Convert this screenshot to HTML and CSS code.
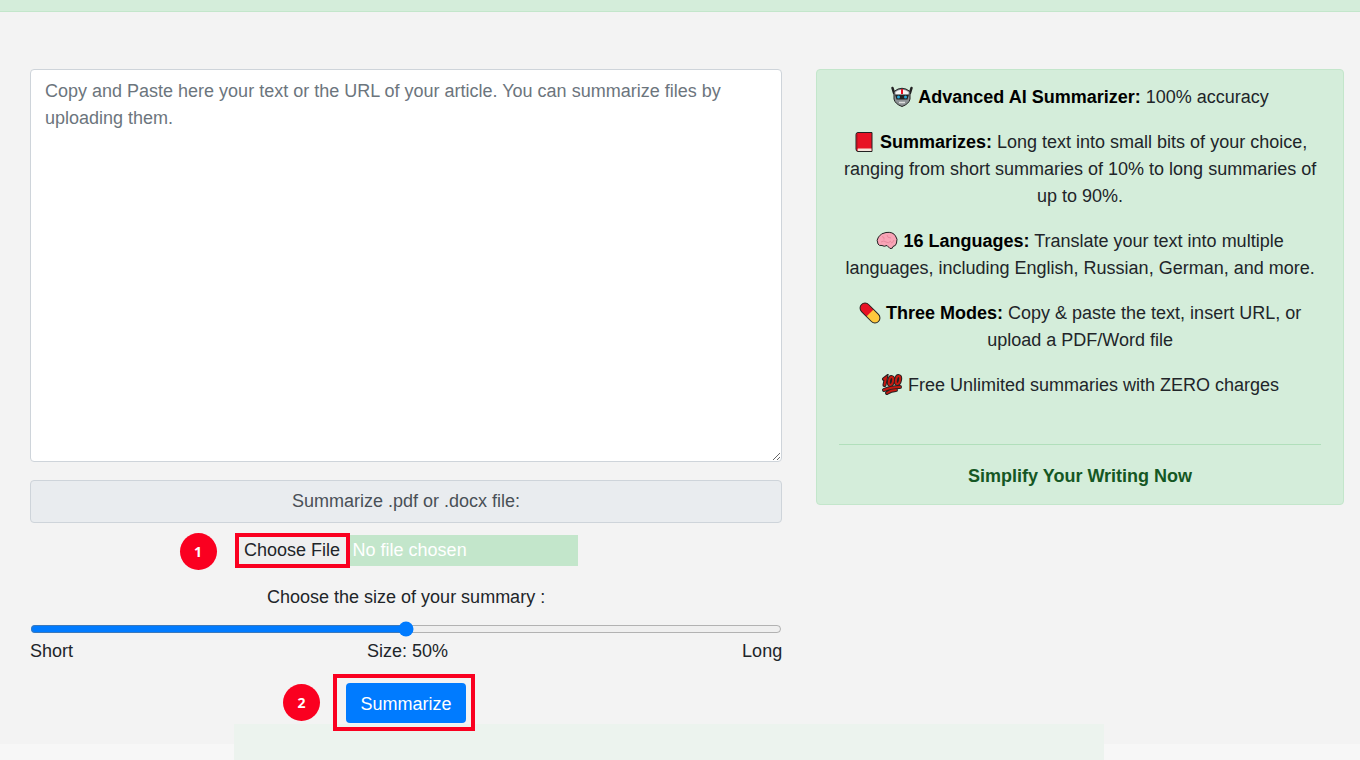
FILE: index.html
```
<!DOCTYPE html>
<html lang="en">

<head>
    <meta charset="UTF-8">
    <meta name="viewport" content="width=device-width, initial-scale=1.0">
    <title>Text Summarizer</title>
    <link rel="stylesheet" href="styles.css">
</head>

<body>
    <div class="top_alert"></div>
    <main class="main">
        <form class="tool" onsubmit="return false">
            <textarea class="text_input" aria-label="Text to summarize" placeholder="Copy and Paste here your text or the URL of your article. You can summarize files by uploading them."></textarea>
            <label class="file_label" for="file">Summarize .pdf or .docx file:</label>
            <div class="file_row">
                <input type="file" class="file_input" id="file">
                <span class="mark mark_file"></span>
                <span class="step step_file">1</span>
            </div>
            <label class="size_label" for="size">Choose the size of your summary :</label>
            <input type="range" class="size_range" id="size" min="0" max="100" value="50">
            <div class="size_text">
                <span>Short</span>
                <span>Size: <span id="percent">50</span>%</span>
                <span>Long</span>
            </div>
            <div class="submit_row">
                <button type="submit" class="btn">Summarize</button>
                <span class="mark mark_submit"></span>
                <span class="step step_submit">2</span>
            </div>
        </form>

        <aside class="features">
            <p>
                <svg class="icon" viewBox="0 0 22 22">
                    <path d="M3 7 1.500 2M19 7l1.500-5" stroke="#222" stroke-width="2.500" stroke-linecap="round" />
                    <path d="M3 5.500Q11-1 19 5.500V13Q18 18 11 20.500 4 18 3 13z" fill="#8d9295" stroke="#222" stroke-width="1" />
                    <path d="M4.500 6Q11 1.500 17.500 6V9h-13z" fill="#f4f4f4" />
                    <path d="M10 3h2v5h-2z" fill="#e81224" />
                    <path d="M4 8.500h14l-1.500 5h-11z" fill="#222" />
                    <circle cx="7.500" cy="11" r="1.500" fill="#27a9dc" />
                    <circle cx="14.500" cy="11" r="1.500" fill="#27a9dc" />
                    <path d="M8 16.500h6" stroke="#ddd" stroke-width="1.500" />
                </svg>
                <b>Advanced AI Summarizer:</b> 100% accuracy
            </p>
            <p>
                <svg class="icon" viewBox="0 0 22 22">
                    <path d="M5 1.500H19V20.500H5Q3 20.500 3 18V3.500Q3 1.500 5 1.500z" fill="#e81224" stroke="#222" stroke-width="1" />
                    <path d="M5 17.500H18.500V20H5q-1-1 0-2.500z" fill="#f4e3da" />
                    <path d="M4 3v14" stroke="#9f1720" stroke-width="1" />
                </svg>
                <b>Summarizes:</b> Long text into small bits of your choice, ranging from short summaries of 10% to long summaries of up to 90%.
            </p>
            <p>
                <svg class="icon" viewBox="0 0 22 22">
                    <path d="M2 14Q0 10 2.500 7 5 3 10 2.500 17 1.500 19.500 6 22 9 20.500 13 20 16 17 16.500 17 19 14 18.500L11 15.500Q8 17 6 15.500 3 16 2 14z" fill="#f8a4b6" stroke="#222" stroke-width="1" stroke-linejoin="round" />
                    <path d="M6 6.500Q9 7 8 9.500M11 5q0 3 4 3M5 12q3-2 5 0t5-1M15 13q2 0 3-3" fill="none" stroke="#e88a9f" stroke-width="1" />
                </svg>
                <b>16 Languages:</b> Translate your text into multiple languages, including English, Russian, German, and more.
            </p>
            <p>
                <svg class="icon" viewBox="0 0 22 22">
                    <g transform="rotate(45 11 11)">
                        <rect x="-1" y="6" width="24" height="10" rx="5" fill="#ffc83d" />
                        <path d="M11 6H4a5 5 0 0 0 0 10H11z" fill="#e81224" />
                        <rect x="-1" y="6" width="24" height="10" rx="5" fill="none" stroke="#222" stroke-width="1" />
                    </g>
                </svg>
                <b>Three Modes:</b> Copy &amp; paste the text, insert URL, or upload a PDF/Word file
            </p>
            <p>
                <svg class="icon" viewBox="0 0 22 22">
                    <g fill="none" stroke-linecap="round">
                        <g stroke="#222" stroke-width="4">
                            <path d="M3 5 5 3.500 3.500 11" />
                            <ellipse cx="10" cy="7" rx="2" ry="4" transform="rotate(12 10 7)" />
                            <ellipse cx="17" cy="6" rx="2" ry="4" transform="rotate(12 17 6)" />
                            <path d="M3 16Q10 13 19 13M6 19q4-3 9-3" />
                        </g>
                        <g stroke="#c51a10" stroke-width="2">
                            <path d="M3 5 5 3.500 3.500 11" />
                            <ellipse cx="10" cy="7" rx="2" ry="4" transform="rotate(12 10 7)" />
                            <ellipse cx="17" cy="6" rx="2" ry="4" transform="rotate(12 17 6)" />
                            <path d="M3 16Q10 13 19 13M6 19q4-3 9-3" />
                        </g>
                    </g>
                </svg>
                Free Unlimited summaries with ZERO charges
            </p>
            <hr>
            <div class="slogan">Simplify Your Writing Now</div>
        </aside>
    </main>
    <div class="bottom_bar"></div>

    <script>
        let size = document.getElementById("size")
        let percent = document.getElementById("percent")
        size.addEventListener("input", function () {
            percent.innerText = size.value
        })
    </script>
</body>

</html>
```
FILE: styles.css
```
* {
    box-sizing: border-box;
}
body {
    margin: 0;
    background-color: #f7f7f7;
    color: #212529;
    font-family: "Liberation Sans", Arial, sans-serif;
    font-size: 18px;
    line-height: 27px;
}
.top_alert {
    height: 12px;
    background-color: #d4edda;
    border-bottom: 1px solid #c3e6cb;
}
.main {
    display: grid;
    grid-template-columns: 57fr 40fr;
    align-items: start;
    gap: 34px;
    padding: 57px 16px 21px 30px;
    background-color: #f3f3f3;
}

/* left side */
.tool {
    display: flex;
    flex-direction: column;
}
.text_input {
    height: 393px;
    padding: 8px 14px;
    border: 1px solid #ced4da;
    border-radius: 4px;
    background-color: white;
    font: inherit;
    resize: vertical;
}
.text_input::placeholder {
    color: #6c757d;
}
.file_label {
    margin-top: 18px;
    padding: 7px;
    border: 1px solid #ced4da;
    border-radius: 4px;
    background-color: #e9ecef;
    color: #495057;
    text-align: center;
}
.file_row {
    position: relative;
    width: 343px;
    margin: 12px auto 0;
}
.file_input {
    display: block;
    width: 100%;
    height: 31px;
    background-color: #c3e6cb;
    color: white;
    font: inherit;
}
.file_input::file-selector-button {
    width: 115px;
    height: 31px;
    margin: 0 3px 0 0;
    padding: 0;
    border: 0;
    background-color: #efefef;
    color: #212529;
    font: inherit;
}
.size_label {
    margin-top: 18px;
    text-align: center;
}
.size_range {
    height: 16px;
    margin: 10px 0 0;
    accent-color: #007bff;
}
.size_text {
    display: flex;
    justify-content: space-between;
    margin-top: 1px;
}
.submit_row {
    position: relative;
    z-index: 1;
    margin: 18px auto 0;
}
.btn {
    display: block;
    width: 120px;
    height: 40px;
    padding: 2px 0 0;
    border: 0;
    border-radius: 4px;
    background-color: #007bff;
    color: white;
    font: inherit;
    cursor: pointer;
}

/* red frames and step numbers over the controls */
.mark {
    position: absolute;
    border: 4px solid #fa0020;
    pointer-events: none;
}
.mark_file {
    top: -2px;
    left: 0;
    width: 115px;
    height: 35px;
}
.mark_submit {
    top: -9px;
    left: -13px;
    width: 142px;
    height: 57px;
}
.step {
    position: absolute;
    width: 37px;
    height: 37px;
    border-radius: 50%;
    background-color: #fa0020;
    color: white;
    font-family: "Open Sans", sans-serif;
    font-size: 14px;
    font-weight: bold;
    line-height: 37px;
    text-align: center;
}
.step_file {
    top: -2px;
    left: -55px;
}
.step_submit {
    top: 1px;
    left: -63px;
}

/* right side */
.features {
    padding: 14px 22px;
    border: 1px solid #c3e6cb;
    border-radius: 4px;
    background-color: #d4edda;
    text-align: center;
}
.features p {
    margin: 0 0 18px;
}
.features b {
    color: black;
}
.features hr {
    margin: 45px 0 18px;
    border: 0;
    border-top: 1px solid #b1dfbb;
}
.icon {
    width: 22px;
    height: 22px;
    vertical-align: -5px;
}
.slogan {
    color: #155724;
    font-weight: bold;
}

.bottom_bar {
    position: fixed;
    bottom: 0;
    left: 234px;
    width: 64%;
    height: 36px;
    background-color: #ecf3ee;
}
```
